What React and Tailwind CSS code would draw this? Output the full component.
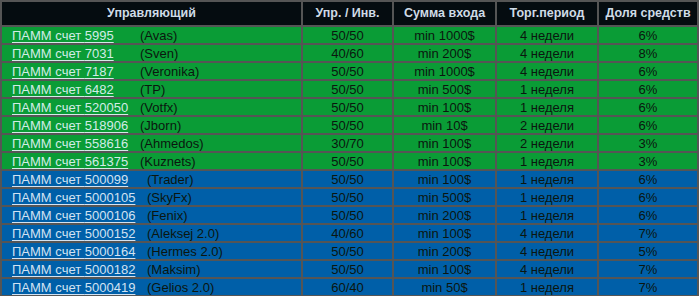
import React from "react";

const rows = [
  ["5995", "Avas", "50/50", "min 1000$", "4 недели", "6%", "g"],
  ["7031", "Sven", "40/60", "min 200$", "4 недели", "8%", "g"],
  ["7187", "Veronika", "50/50", "min 1000$", "4 недели", "6%", "g"],
  ["6482", "TP", "50/50", "min 500$", "1 неделя", "6%", "g"],
  ["520050", "Votfx", "50/50", "min 100$", "1 неделя", "6%", "g"],
  ["518906", "Jborn", "50/50", "min 10$", "2 недели", "6%", "g"],
  ["558616", "Ahmedos", "30/70", "min 100$", "2 недели", "3%", "g"],
  ["561375", "Kuznets", "50/50", "min 100$", "1 неделя", "3%", "g"],
  ["500099", "Trader", "50/50", "min 100$", "1 неделя", "6%", "b"],
  ["5000105", "SkyFx", "50/50", "min 500$", "1 неделя", "6%", "b"],
  ["5000106", "Fenix", "50/50", "min 200$", "1 неделя", "6%", "b"],
  ["5000152", "Aleksej 2.0", "40/60", "min 100$", "4 недели", "7%", "b"],
  ["5000164", "Hermes 2.0", "50/50", "min 200$", "4 недели", "5%", "b"],
  ["5000182", "Maksim", "50/50", "min 100$", "4 недели", "7%", "b"],
  ["5000419", "Gelios 2.0", "60/40", "min 50$", "1 неделя", "7%", "b"],
];

const headers = ["Управляющий", "Упр. / Инв.", "Сумма входа", "Торг.период", "Доля средств"];

export default function App() {
  return (
    <div className="w-[699px] h-[296px] overflow-hidden bg-[#555555]" style={{ fontFamily: '"Liberation Sans", Arial, sans-serif' }}>
      <div className="grid grid-cols-[299px_89px_101px_100px_98px] grid-rows-[23px] auto-rows-[16px] gap-[2px] p-[2px]">
        {headers.map((h) => (
          <div key={h} className="bg-[#050c10] text-[#cfdbe6] font-bold text-[12.5px] flex items-center justify-center leading-none">
            {h}
          </div>
        ))}
        {rows.map((r) => {
          const bg = r[6] === "g" ? "bg-[#0a9c36]" : "bg-[#005fa8]";
          const link = r[6] === "g" ? "w-[128px] text-[#d2ece6]" : "w-[135px] text-[#d2e2f2]";
          return (
            <React.Fragment key={r[0]}>
              <div className={`${bg} flex items-center pl-[10px] text-[13px] leading-none text-[#0b160f] whitespace-nowrap`}>
                <span className={`${link} inline-block underline underline-offset-2`}>ПАММ счет {r[0]}</span>
                <span>({r[1]})</span>
              </div>
              {[r[2], r[3], r[4], r[5]].map((v, i) => (
                <div key={i} className={`${bg} flex items-center justify-center text-[13px] leading-none text-[#0b160f] whitespace-nowrap`}>
                  {v}
                </div>
              ))}
            </React.Fragment>
          );
        })}
      </div>
    </div>
  );
}
